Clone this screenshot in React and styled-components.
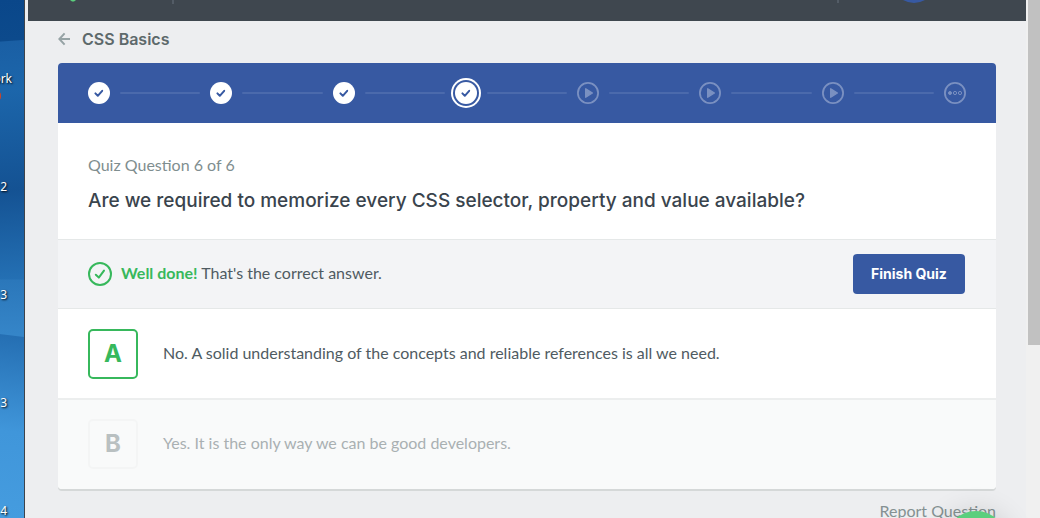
import React from "react";
import styled, { createGlobalStyle, css } from "styled-components";

const blue = "#3759a2";
const green = "#37b85c";
const line = "#e5e8e8";
const display = 'Inter, "Open Sans", sans-serif';

const GlobalStyle = createGlobalStyle`
  *, *::before, *::after { box-sizing: border-box; }
  body {
    margin: 0;
    overflow: hidden;
    font-family: Lato, "Open Sans", sans-serif;
    font-size: 16px;
    line-height: 20px;
    color: #4f5b62;
  }
  button { font: inherit; color: inherit; }
  a { color: inherit; text-decoration: none; }
`;

const Screen = styled.div`
  display: flex;
  height: 100vh;
  overflow: hidden;
  background: #edeef0;
`;

const Desktop = styled.aside`
  flex: none;
  width: 25px;
  overflow: hidden;
  border-right: 1px solid #3d444d;
  background:
    linear-gradient(187deg, transparent 0 334px, #256fb3 335px, #4096da 430px, #459cdf 100%),
    linear-gradient(180deg, transparent 0 279px, #2b77ba 280px, #3585c8 334px),
    linear-gradient(176deg, #0a478a 0, #0c4a8c 41px, #1a5fa4 42px, #1c66ab 90px, #145293 190px, #2470b4 280px);
`;

const DesktopLabels = styled.ul`
  list-style: none;
  margin: 0;
  padding: 70px 0 0;
`;

const DesktopLabel = styled.li`
  display: flex;
  justify-content: flex-end;
  width: ${({ $wide }) => ($wide ? 12 : 7)}px;
  height: 108px;
  font: 12px/18px "Noto Sans", sans-serif;
  color: #fff;
  text-shadow: 1px 1px 2px #000;
`;

const Mark = styled.span`
  position: relative;
  &::after {
    content: "";
    position: absolute;
    right: 11px;
    top: 22px;
    width: 6px;
    height: 8px;
    border-radius: 3px;
    background: #c8452c;
  }
`;

const Browser = styled.div`
  flex: 1;
  min-width: 0;
  padding-left: 3px;
`;

const TopBar = styled.header`
  display: flex;
  align-items: flex-start;
  height: 21px;
  padding: 0 101px 0 40px;
  background: #3f474f;
`;

const Logo = styled.svg`
  display: block;
  width: 10px;
  height: 2px;
`;

const Divider = styled.span`
  width: 2px;
  height: ${({ $tall }) => ($tall ? 4 : 3)}px;
  margin-left: ${({ $end }) => ($end ? "auto" : "94px")};
  margin-right: ${({ $end }) => ($end ? "64px" : "0")};
  background: #535c66;
`;

const Avatar = styled.svg`
  display: block;
  width: 22px;
  height: 3px;
`;

const Main = styled.main`
  padding: 8px 30px 0;
`;

const BackLink = styled.a`
  display: flex;
  align-items: center;
  gap: 12px;
  width: max-content;
  height: 20px;
  margin-bottom: 14px;
  font-family: ${display};
  font-weight: 600;
  color: #5d696b;
  svg { display: block; }
`;

const Card = styled.section`
  border-radius: 4px;
  overflow: hidden;
  background: #fff;
  box-shadow: 0 2px 0 #d5d8d8;
`;

const Steps = styled.ol`
  display: flex;
  align-items: center;
  height: 60px;
  margin: 0;
  padding: 0 30px;
  list-style: none;
  background: ${blue};
`;

const Step = styled.li`
  display: flex;
  align-items: center;
  flex: ${({ $first }) => ($first ? "none" : "1")};
  ${({ $first }) =>
    !$first &&
    css`
      &::before {
        content: "";
        flex: 1;
        height: 2px;
        margin: 0 10px;
        border-radius: 1px;
        background: #4b6aac;
      }
    `}
`;

const StepDot = styled.a`
  display: grid;
  place-items: center;
  flex: none;
  width: 22px;
  height: 22px;
  border-radius: 50%;
  color: #7a90c1;
  ${({ $state }) =>
    ($state === "done" || $state === "current") &&
    css`
      color: ${blue};
      background: #fff;
    `}
  ${({ $state }) =>
    $state === "current" &&
    css`
      box-shadow: 0 0 0 2px ${blue}, 0 0 0 4px #fff;
    `}
  svg { display: block; }
`;

const Question = styled.div`
  padding: 32px 30px 26px;
  border-bottom: 1px solid ${line};
`;

const Counter = styled.p`
  margin: 0 0 14px;
  color: #7f8e8f;
`;

const Prompt = styled.h1`
  margin: 0;
  font-family: ${display};
  font-size: 19px;
  line-height: 24px;
  font-weight: 550;
  color: #3a444d;
`;

const Feedback = styled.div`
  display: flex;
  align-items: center;
  gap: 9px;
  padding: 14px 31px 14px 30px;
  border-bottom: 1px solid ${line};
  background: #f3f4f6;
  p { flex: 1; margin: 0; padding-bottom: 2px; }
  strong { color: ${green}; font-weight: 700; }
  svg { flex: none; }
`;

const PrimaryButton = styled.button`
  width: 112px;
  height: 40px;
  padding: 0;
  border: 0;
  border-radius: 4px;
  background: ${blue};
  color: #fff;
  font-family: ${display};
  font-size: 14px;
  font-weight: 700;
`;

const Answer = styled.button`
  display: flex;
  align-items: center;
  gap: 25px;
  width: 100%;
  padding: 20px 30px 19px;
  border: 0;
  text-align: left;
  background: #fff;
  &:disabled {
    padding: 19px 30px 20px;
    border-top: 2px solid #eceeee;
    background: #f9fafa;
    color: #a9b0b2;
  }
`;

const AnswerText = styled.span`
  padding-bottom: 2px;
`;

const Letter = styled.span`
  display: grid;
  place-items: center;
  flex: none;
  width: 50px;
  height: 50px;
  border: 2px solid ${green};
  border-radius: 5px;
  color: ${green};
  font-family: ${display};
  font-size: 24px;
  font-weight: 700;
  ${Answer}:disabled & {
    border-color: #f4f5f5;
    color: #b9c0c1;
  }
`;

const CardFooter = styled.footer`
  display: flex;
  justify-content: flex-end;
  padding-top: 12px;
  color: #849192;
`;

const ChatButton = styled.button`
  position: fixed;
  right: 32px;
  bottom: -57px;
  width: 64px;
  height: 64px;
  border: 0;
  border-radius: 50%;
  background: #5bcf7d;
  box-shadow: 0 2px 30px rgba(0, 0, 0, 0.16);
`;

const ScrollTrack = styled.div`
  flex: none;
  width: 14px;
  padding-left: 2px;
  background: #f0f0f0;
`;

const ScrollThumb = styled.div`
  height: 345px;
  background: #c1c1c1;
`;

function StepIcon({ state }) {
  if (state === "done" || state === "current") {
    return (
      <svg width="22" height="22" viewBox="0 0 22 22" fill="none" aria-hidden="true">
        <path d="M7.4 11.4 9.8 13.8 14.2 8.8" stroke="currentColor" strokeWidth="2" strokeLinecap="round" strokeLinejoin="round" />
      </svg>
    );
  }
  return (
    <svg width="22" height="22" viewBox="0 0 22 22" fill="none" stroke="currentColor" aria-hidden="true">
      <circle cx="11" cy="11" r="10.1" strokeWidth="1.8" />
      {state === "video" ? (
        <path d="M8.7 6.8v8.4L15.4 11z" fill="currentColor" strokeWidth="1.4" strokeLinejoin="round" />
      ) : (
        <>
          <circle cx="6" cy="11" r="1.5" fill="currentColor" />
          <circle cx="11" cy="11" r="1.6" />
          <circle cx="16" cy="11" r="1.6" />
        </>
      )}
    </svg>
  );
}

const steps = ["done", "done", "done", "current", "video", "video", "video", "quiz"];
const labels = ["ork", "2", "3", "3", "4"];

export default function App() {
  return (
    <>
      <GlobalStyle />
      <Screen>
        <Desktop>
          <DesktopLabels>
            {labels.map((text, i) => (
              <DesktopLabel key={i} $wide={i === 0}>
                {i === 0 ? <Mark>{text}</Mark> : text}
              </DesktopLabel>
            ))}
          </DesktopLabels>
        </Desktop>
        <Browser>
          <TopBar>
            <Logo viewBox="0 0 10 2" aria-hidden="true">
              <path d="M2 0h6L6 1.6H4z" fill="#5bcf7d" />
            </Logo>
            <Divider $tall />
            <Divider $end />
            <Avatar viewBox="0 0 22 3" aria-hidden="true">
              <path d="M0 0h22Q11 6 0 0z" fill={blue} />
            </Avatar>
          </TopBar>
          <Main>
            <BackLink href="#course">
              <svg width="12" height="14" viewBox="0 0 12 14" fill="none" stroke="#96a3a5" strokeWidth="2" aria-hidden="true">
                <path d="M6.6 1.4 1.4 7l5.2 5.6M1.4 7H12" />
              </svg>
              CSS Basics
            </BackLink>
            <Card>
              <Steps>
                {steps.map((state, i) => (
                  <Step key={i} $first={i === 0}>
                    <StepDot
                      href={`#step-${i + 1}`}
                      $state={state}
                      aria-label={`Step ${i + 1}`}
                      aria-current={state === "current" ? "step" : undefined}
                    >
                      <StepIcon state={state} />
                    </StepDot>
                  </Step>
                ))}
              </Steps>
              <Question>
                <Counter>Quiz Question 6 of 6</Counter>
                <Prompt>Are we required to memorize every CSS selector, property and value available?</Prompt>
              </Question>
              <Feedback role="status">
                <svg width="24" height="24" viewBox="0 0 24 24" fill="none" stroke={green} strokeWidth="2" aria-hidden="true">
                  <circle cx="12" cy="12" r="11" />
                  <path d="M7.8 12.8 10.8 15.6 16 8.6" strokeLinecap="round" strokeLinejoin="round" />
                </svg>
                <p>
                  <strong>Well done!</strong> That's the correct answer.
                </p>
                <PrimaryButton type="button">Finish Quiz</PrimaryButton>
              </Feedback>
              <Answer type="button">
                <Letter>A</Letter>
                <AnswerText>No. A solid understanding of the concepts and reliable references is all we need.</AnswerText>
              </Answer>
              <Answer type="button" disabled>
                <Letter>B</Letter>
                <AnswerText>Yes. It is the only way we can be good developers.</AnswerText>
              </Answer>
            </Card>
            <CardFooter>
              <a href="#report">Report Question</a>
            </CardFooter>
          </Main>
        </Browser>
        <ScrollTrack>
          <ScrollThumb />
        </ScrollTrack>
        <ChatButton type="button" aria-label="Open chat" />
      </Screen>
    </>
  );
}
